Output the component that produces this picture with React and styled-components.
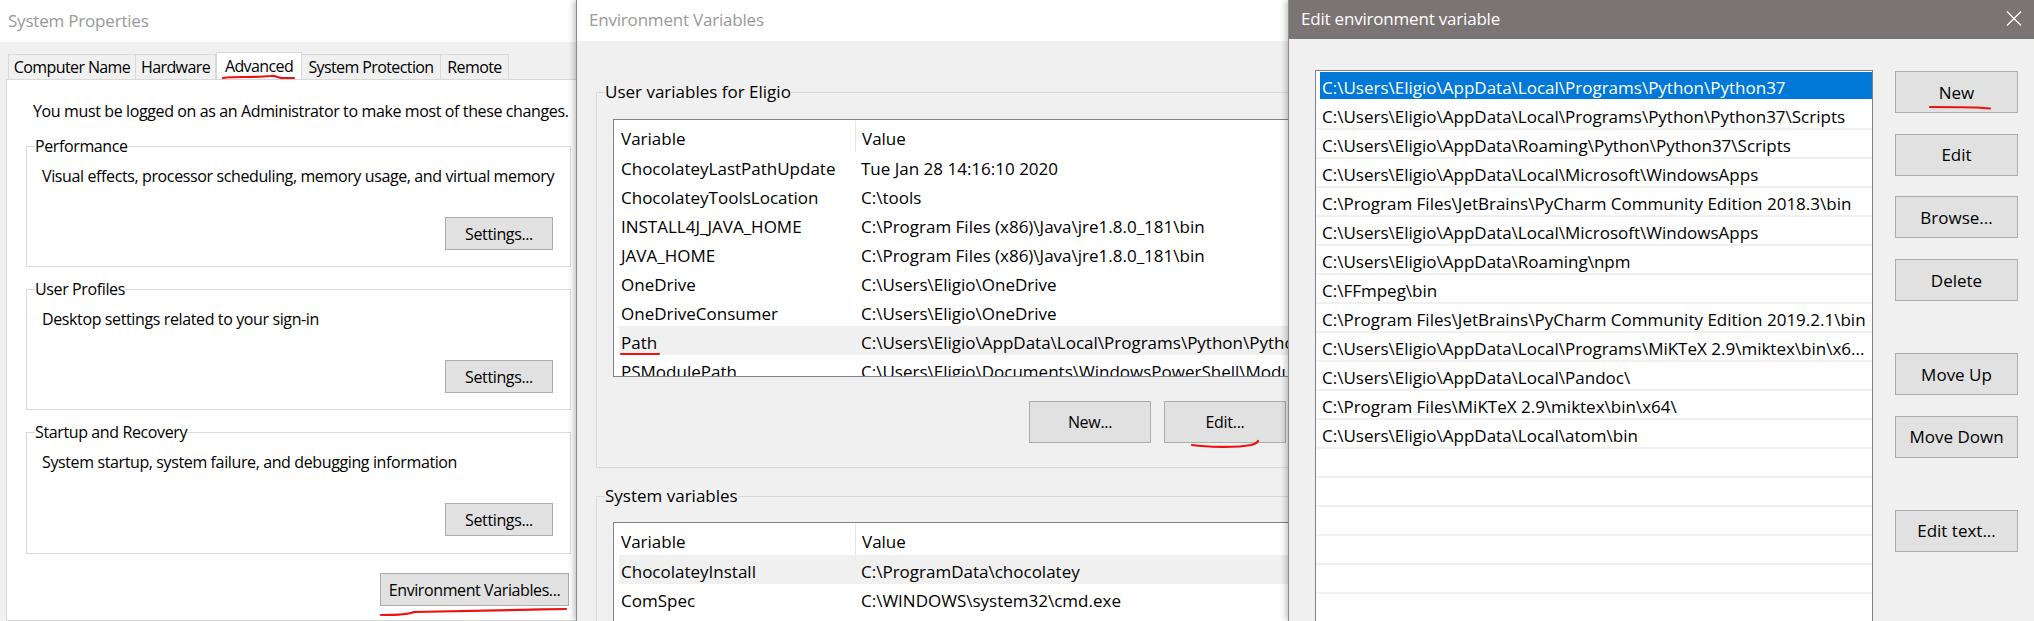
import styled, { createGlobalStyle } from "styled-components";

const GlobalStyle = createGlobalStyle`
  html, body { margin: 0; padding: 0; background: #fff; }
  body { font-family: "Open Sans", "Noto Sans", sans-serif; font-size: 16px; color: #000; overflow: hidden; }
`;

const Desktop = styled.div`
  display: flex;
  width: 2034px;
  height: 621px;
  overflow: hidden;
`;

const Window = styled.section`
  position: relative;
  flex: none;
  width: ${(p) => p.$width}px;
  height: 621px;
  display: flex;
  flex-direction: column;
  background: #f0f0f0;
  box-shadow: ${(p) => (p.$first ? "none" : "-1px 0 0 #8c8c8c, -3px 0 6px rgba(0,0,0,.25)")};
  z-index: ${(p) => p.$z};
`;

const TitleBar = styled.header`
  flex: none;
  height: ${(p) => p.$height}px;
  display: flex;
  align-items: center;
  justify-content: space-between;
  padding: 0 12px 2px ${(p) => p.$left}px;
  box-sizing: border-box;
  background: ${(p) => (p.$active ? "#7a7474" : "#fff")};
  color: ${(p) => (p.$active ? "#fff" : "#999")};
  font-size: 17px;
  letter-spacing: -0.2px;
`;

const Btn = styled.div`
  position: relative;
  box-sizing: border-box;
  width: ${(p) => p.$w}px;
  height: ${(p) => p.$h}px;
  flex: none;
  display: flex;
  align-items: center;
  justify-content: center;
  background: #e1e1e1;
  border: 1px solid #adadad;
`;

/* System Properties */
const Tabs = styled.div`
  display: flex;
  align-items: flex-end;
  height: 37px;
  padding-left: 8px;
  box-sizing: border-box;
`;

const Tab = styled.div`
  position: relative;
  box-sizing: border-box;
  width: ${(p) => p.$w}px;
  height: ${(p) => (p.$on ? 27 : 25)}px;
  display: flex;
  align-items: center;
  justify-content: center;
  background: ${(p) => (p.$on ? "#fff" : "#f0f0f0")};
  border: 1px solid #d9d9d9;
  border-bottom: none;
  border-left: ${(p) => (p.$on ? "1px solid #d9d9d9" : "none")};
  &:first-child { border-left: 1px solid #d9d9d9; }
  letter-spacing: -0.6px;
`;

const TabPanel = styled.div`
  flex: 1;
  margin-left: 6px;
  background: #fff;
  border: 1px solid #d9d9d9;
  border-right: none;
  padding: 19px 6px 0 19px;
  display: flex;
  flex-direction: column;
  letter-spacing: -0.38px;
`;

const Notice = styled.div`
  height: 24px;
  line-height: 24px;
  padding-left: 7px;
  margin-bottom: 13px;
`;

const Group = styled.fieldset`
  box-sizing: border-box;
  margin: 0 0 ${(p) => p.$after ?? 12}px;
  padding: 0 0 16px;
  height: ${(p) => p.$h}px;
  border: 1px solid #d9d9d9;
  border-right: ${(p) => (p.$open ? "none" : "1px solid #d9d9d9")};
  min-width: 0;
  flex: none;
`;

const Legend = styled.legend`
  padding: 0;
  margin-left: 8px;
  line-height: 20px;
`;

const GroupText = styled.div`
  height: 22px;
  line-height: 22px;
  margin-top: 9px;
  padding-left: 15px;
`;

const Actions = styled.div`
  margin-top: 30px;
  padding-right: 17px;
  display: flex;
  justify-content: flex-end;
`;

const PanelFooter = styled.div`
  display: flex;
  justify-content: flex-end;
  padding-right: 2px;
  letter-spacing: -0.4px;
`;

/* Environment Variables */
const EnvBody = styled.div`
  flex: 1;
  min-height: 0;
  padding: 41px 0 0 19px;
  display: flex;
  flex-direction: column;
  font-size: 17px;
  overflow: hidden;
`;

const EnvGroup = styled(Group)`
  padding: 0;
  width: 760px;
  margin-bottom: 18px;
`;

const ListView = styled.div`
  box-sizing: border-box;
  height: ${(p) => p.$h}px;
  margin: ${(p) => p.$top}px 0 0 16px;
  background: #fff;
  border: 1px solid #82828f;
  padding: 1px 0 0 5px;
  overflow: hidden;
`;

const Row = styled.div`
  position: relative;
  display: grid;
  grid-template-columns: 236px 1fr;
  height: ${(p) => (p.$head ? 31 : 29)}px;
  align-items: center;
  white-space: nowrap;
  background: ${(p) => (p.$hot ? "#f0f0f0" : "transparent")};
`;

const Cell = styled.div`
  box-sizing: border-box;
  padding: 3px 0 0 ${(p) => (p.$value ? 6 : 2)}px;
  height: 100%;
  display: flex;
  align-items: center;
  border-left: ${(p) => (p.$sep ? "1px solid #e5e5e5" : "none")};
`;

const ButtonRow = styled.div`
  display: flex;
  gap: 13px;
  margin: 24px 0 0 432px;
  font-size: 16px;
  letter-spacing: -0.3px;
`;

/* Edit environment variable */
const EditBody = styled.div`
  flex: 1;
  min-height: 0;
  display: flex;
  padding: 31px 0 0 26px;
  font-size: 17px;
  overflow: hidden;
`;

const PathList = styled.div`
  box-sizing: border-box;
  width: 558px;
  height: 560px;
  flex: none;
  background: #fff;
  border: 1px solid #82828f;
  padding-top: 1px;
  overflow: hidden;
`;

const PathRow = styled.div`
  box-sizing: border-box;
  height: 29px;
  line-height: 31px;
  padding-left: ${(p) => (p.$selected ? 2 : 6)}px;
  white-space: nowrap;
  overflow: hidden;
  background: ${(p) => (p.$selected ? "#0078d7" : "#fff")};
  color: ${(p) => (p.$selected ? "#fff" : "#000")};
  border-bottom: 2px solid ${(p) => (p.$selected ? "#fff" : "#f0f0f0")};
  margin-left: ${(p) => (p.$selected ? 4 : 0)}px;
`;

const SideButtons = styled.div`
  margin-left: 22px;
  padding-top: 1px;
  display: flex;
  flex-direction: column;
  gap: 20.7px;
`;

const SideGap = styled.div`
  height: 10.6px;
`;

const CloseIcon = styled.svg`
  width: 16px;
  height: 15px;
  stroke: #fff;
  stroke-width: 1.2;
  fill: none;
  flex: none;
`;

const Mark = styled.svg`
  position: absolute;
  left: ${(p) => p.$x}px;
  top: ${(p) => p.$y}px;
  width: ${(p) => p.$w}px;
  height: ${(p) => p.$h}px;
  fill: none;
  stroke: #ee1111;
  stroke-width: 2.2;
  stroke-linecap: round;
  pointer-events: none;
  overflow: visible;
`;

const userVars = [
  ["ChocolateyLastPathUpdate", "Tue Jan 28 14:16:10 2020"],
  ["ChocolateyToolsLocation", "C:\\tools"],
  ["INSTALL4J_JAVA_HOME", "C:\\Program Files (x86)\\Java\\jre1.8.0_181\\bin"],
  ["JAVA_HOME", "C:\\Program Files (x86)\\Java\\jre1.8.0_181\\bin"],
  ["OneDrive", "C:\\Users\\Eligio\\OneDrive"],
  ["OneDriveConsumer", "C:\\Users\\Eligio\\OneDrive"],
  ["Path", "C:\\Users\\Eligio\\AppData\\Local\\Programs\\Python\\Python37\\Scripts"],
  ["PSModulePath", "C:\\Users\\Eligio\\Documents\\WindowsPowerShell\\Modules"],
];

const systemVars = [
  ["ChocolateyInstall", "C:\\ProgramData\\chocolatey"],
  ["ComSpec", "C:\\WINDOWS\\system32\\cmd.exe"],
];

const paths = [
  "C:\\Users\\Eligio\\AppData\\Local\\Programs\\Python\\Python37",
  "C:\\Users\\Eligio\\AppData\\Local\\Programs\\Python\\Python37\\Scripts",
  "C:\\Users\\Eligio\\AppData\\Roaming\\Python\\Python37\\Scripts",
  "C:\\Users\\Eligio\\AppData\\Local\\Microsoft\\WindowsApps",
  "C:\\Program Files\\JetBrains\\PyCharm Community Edition 2018.3\\bin",
  "C:\\Users\\Eligio\\AppData\\Local\\Microsoft\\WindowsApps",
  "C:\\Users\\Eligio\\AppData\\Roaming\\npm",
  "C:\\FFmpeg\\bin",
  "C:\\Program Files\\JetBrains\\PyCharm Community Edition 2019.2.1\\bin",
  "C:\\Users\\Eligio\\AppData\\Local\\Programs\\MiKTeX 2.9\\miktex\\bin\\x6...",
  "C:\\Users\\Eligio\\AppData\\Local\\Pandoc\\",
  "C:\\Program Files\\MiKTeX 2.9\\miktex\\bin\\x64\\",
  "C:\\Users\\Eligio\\AppData\\Local\\atom\\bin",
  "", "", "", "", "",
];

function VarList({ rows, height, top, hot }) {
  return (
    <ListView $h={height} $top={top}>
      <Row $head>
        <Cell>Variable</Cell>
        <Cell $value $sep>Value</Cell>
      </Row>
      {rows.map(([name, value]) => (
        <Row key={name} $hot={name === hot}>
          <Cell>{name}</Cell>
          <Cell $value>{value}</Cell>
          {name === "Path" && (
            <Mark $x={2} $y={27} $w={39} $h={2} viewBox="0 0 39 2"><path d="M0 1 L38 1" /></Mark>
          )}
        </Row>
      ))}
    </ListView>
  );
}

function SettingsGroup({ title, text, height, after }) {
  return (
    <Group $h={height} $after={after}>
      <Legend>{title}</Legend>
      <GroupText>{text}</GroupText>
      <Actions><Btn $w={108} $h={33}>Settings...</Btn></Actions>
    </Group>
  );
}

export default function App() {
  return (
    <>
      <GlobalStyle />
      <Desktop>
        <Window $width={577} $first $z={1}>
          <TitleBar $height={42} $left={8}>System Properties</TitleBar>
          <Tabs>
            <Tab $w={128}>Computer Name</Tab>
            <Tab $w={80}>Hardware</Tab>
            <Tab $w={86} $on>
              Advanced
              <Mark $x={6} $y={22} $w={72} $h={5} viewBox="0 0 72 5"><path d="M0 3 C12 1 30 3 48 1 C53 0 56 4 60 3 L71 3" /></Mark>
            </Tab>
            <Tab $w={139}>System Protection</Tab>
            <Tab $w={68}>Remote</Tab>
          </Tabs>
          <TabPanel>
            <Notice>You must be logged on as an Administrator to make most of these changes.</Notice>
            <SettingsGroup title="Performance" text="Visual effects, processor scheduling, memory usage, and virtual memory" height={131} />
            <SettingsGroup title="User Profiles" text="Desktop settings related to your sign-in" height={131} />
            <SettingsGroup title="Startup and Recovery" text="System startup, system failure, and debugging information" height={132} after={19} />
            <PanelFooter>
              <Btn $w={189} $h={33}>
                Environment Variables...
                <Mark $x={-1} $y={35} $w={188} $h={7} viewBox="0 0 188 7"><path d="M1 6 C15 6 28 6 34 3 C70 2 130 1 186 0" /></Mark>
              </Btn>
            </PanelFooter>
          </TabPanel>
        </Window>

        <Window $width={712} $z={2}>
          <TitleBar $height={41} $left={12}>Environment Variables</TitleBar>
          <EnvBody>
            <EnvGroup $h={386} $open>
              <Legend>User variables for Eligio</Legend>
              <VarList rows={userVars} height={258} top={17} hot="Path" />
              <ButtonRow>
                <Btn $w={122} $h={42}>New...</Btn>
                <Btn $w={122} $h={42}>
                  Edit...
                  <Mark $x={26} $y={38} $w={68} $h={8} viewBox="0 0 68 8"><path d="M1 5 C15 7 45 8 60 5 C64 4 66 3 67 1" /></Mark>
                </Btn>
              </ButtonRow>
            </EnvGroup>
            <EnvGroup $h={160} $open>
              <Legend>System variables</Legend>
              <VarList rows={systemVars} height={140} top={16} hot="ChocolateyInstall" />
            </EnvGroup>
          </EnvBody>
        </Window>

        <Window $width={745} $z={3}>
          <TitleBar $height={39} $active $left={12}>
            Edit environment variable
            <CloseIcon viewBox="0 0 16 15"><path d="M1 0.5 L15 14.5 M15 0.5 L1 14.5" /></CloseIcon>
          </TitleBar>
          <EditBody>
            <PathList>
              {paths.map((p, i) => (
                <PathRow key={i} $selected={i === 0}>{p}</PathRow>
              ))}
            </PathList>
            <SideButtons>
              <Btn $w={123} $h={42}>
                New
                <Mark $x={33} $y={34} $w={62} $h={4} viewBox="0 0 62 4"><path d="M1 1 C20 1 40 1 48 1.5 L61 2.5" /></Mark>
              </Btn>
              <Btn $w={123} $h={42}>Edit</Btn>
              <Btn $w={123} $h={42}>Browse...</Btn>
              <Btn $w={123} $h={42}>Delete</Btn>
              <SideGap />
              <Btn $w={123} $h={42}>Move Up</Btn>
              <Btn $w={123} $h={42}>Move Down</Btn>
              <SideGap />
              <Btn $w={123} $h={42}>Edit text...</Btn>
            </SideButtons>
          </EditBody>
        </Window>
      </Desktop>
    </>
  );
}
